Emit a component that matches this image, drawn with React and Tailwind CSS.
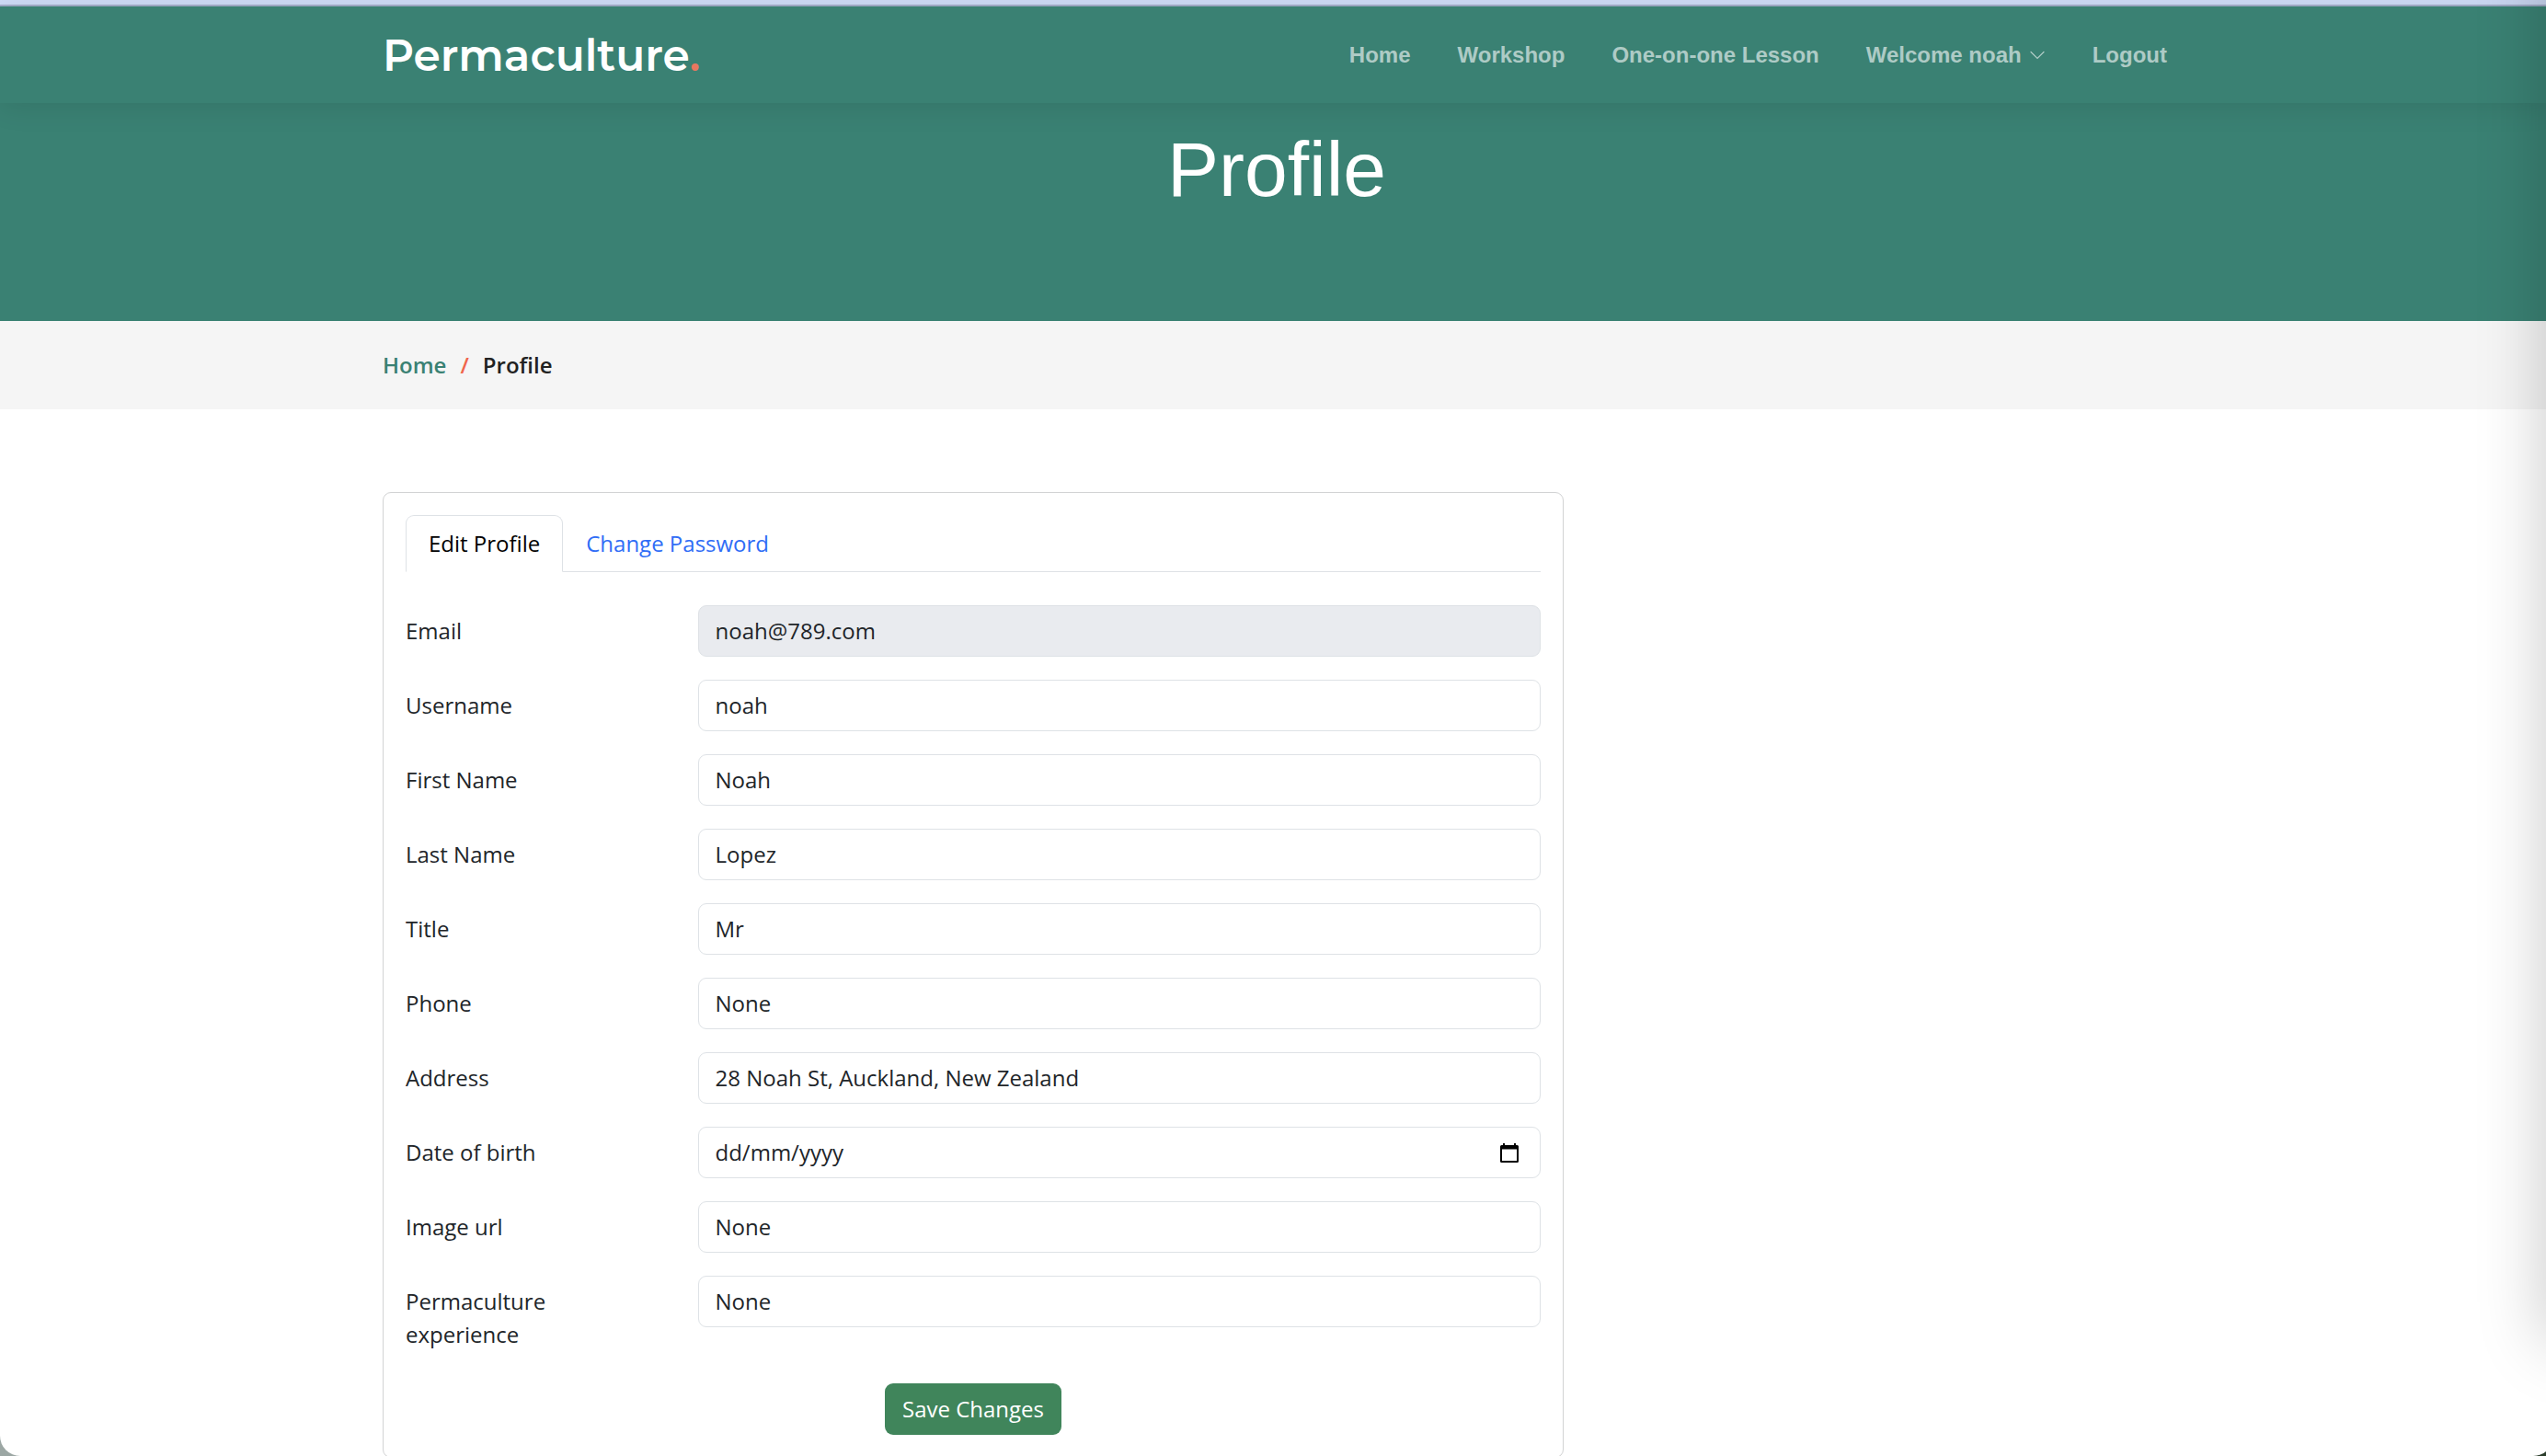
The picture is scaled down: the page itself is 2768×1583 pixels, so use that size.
import React from "react";

const navClass = "text-white/60 hover:text-white";

const fields = [
  { id: "username", label: "Username", value: "noah" },
  { id: "first-name", label: "First Name", value: "Noah" },
  { id: "last-name", label: "Last Name", value: "Lopez" },
  { id: "title", label: "Title", value: "Mr" },
  { id: "phone", label: "Phone", value: "None" },
  { id: "address", label: "Address", value: "28 Noah St, Auckland, New Zealand" },
  { id: "dob", label: "Date of birth", value: "", type: "date" },
  { id: "image-url", label: "Image url", value: "None" },
  { id: "experience", label: "Permaculture experience", value: "None" },
];

function Container({ className = "", children }) {
  return <div className={`mx-auto w-full max-w-[1980px] px-[18px] ${className}`}>{children}</div>;
}

function CalendarIcon() {
  return (
    <svg viewBox="0 0 20 21" className="h-[21px] w-5" aria-hidden="true">
      <path
        fill="#000"
        d="M3 0h2v2h10V0h2v2h1.5A1.5 1.5 0 0 1 20 3.500V19.500A1.500 1.500 0 0 1 18.500 21H1.500A1.500 1.500 0 0 1 0 19.500V3.500A1.500 1.500 0 0 1 1.500 2H3zM2 6.500V19H18V6.500z"
      />
    </svg>
  );
}

function Field({ id, label, value, type = "text", readOnly = false }) {
  const box = readOnly ? "bg-[#e9ebef]" : "bg-white";
  return (
    <div className="-mx-[18px] flex items-start">
      <label htmlFor={id} className="w-1/4 py-[10px] pr-9 pl-[18px]">
        {label}
      </label>
      <div className="w-3/4 px-[18px]">
        {type === "date" ? (
          <div className="flex h-14 items-center rounded-[9px] border border-[#dee2e6] bg-white pr-[23px] pl-[18px]">
            <input
              id={id}
              type="text"
              defaultValue="dd/mm/yyyy"
              className="min-w-0 flex-1 bg-transparent outline-none"
            />
            <button type="button" aria-label="Open calendar">
              <CalendarIcon />
            </button>
          </div>
        ) : (
          <input
            id={id}
            type={type}
            defaultValue={value}
            readOnly={readOnly}
            className={`block h-14 w-full rounded-[9px] border border-[#dee2e6] px-[18px] pb-0.5 ${box}`}
          />
        )}
      </div>
    </div>
  );
}

export default function App() {
  return (
    <div className="relative h-screen overflow-hidden bg-linear-to-r from-[#9ca7a4] to-[#2b3d2b]">
      {/* The page runs slightly past the right edge of the window */}
      <div className="-mr-2 h-full overflow-hidden rounded-b-[22px] bg-white font-['Open_Sans',sans-serif] text-2xl leading-9 text-[#212529]">
        <div className="h-[7px] border-b-2 border-[#a3adc9] bg-[#cfdcf7]" />

        <header className="relative bg-[#3a8173] shadow-[0_3px_30px_rgba(0,0,0,0.1)]">
          <Container className="flex h-[105px] items-center justify-between">
            <a
              href="#home"
              className="pt-0.5 font-['Montserrat','Inter',sans-serif] text-[47px] leading-[60px] font-semibold text-white"
            >
              Permaculture<span className="text-[#e8775f]">.</span>
            </a>
            <nav className="flex items-center gap-[51px] pr-1 font-['Liberation_Sans',sans-serif] font-bold">
              <a href="#home" className={navClass}>Home</a>
              <a href="#workshop" className={navClass}>Workshop</a>
              <a href="#lesson" className={navClass}>One-on-one Lesson</a>
              <a href="#account" className={`flex items-center gap-2 ${navClass}`}>
                Welcome noah
                <svg viewBox="0 0 18 10" className="h-[10px] w-[18px]" fill="none" stroke="currentColor" strokeWidth="1.2" strokeLinecap="round" aria-hidden="true">
                  <path d="M2 1.500l7 7 7-7" />
                </svg>
              </a>
              <a href="#logout" className={navClass}>Logout</a>
            </nav>
          </Container>
        </header>

        <section className="bg-[#3a8173]">
          <Container className="pt-[22px] pb-[115px] text-center">
            <h1 className="font-['Liberation_Sans',sans-serif] text-[84px] leading-[100px] text-white">Profile</h1>
          </Container>
        </section>

        <nav aria-label="Breadcrumb" className="bg-[#f5f5f5] py-[30px] font-semibold">
          <Container>
            <ol className="flex gap-[15px]">
              <li><a href="#home" className="text-[#3a8173]">Home</a></li>
              <li className="text-[#f0654b]" aria-hidden="true">/</li>
              <li className="text-[#222222]">Profile</li>
            </ol>
          </Container>
        </nav>

        <main className="pt-[90px]">
          <Container>
            <div className="-mx-[18px]">
              <div className="w-2/3 px-[18px]">
                <div className="rounded-[9px] border border-[#d2d3d4] p-6">
                  <div role="tablist" className="flex border-b border-[#dee2e6]">
                    <button
                      type="button"
                      role="tab"
                      aria-selected="true"
                      className="-mb-px rounded-t-[9px] border border-[#dee2e6] border-b-white bg-white px-6 py-3 text-black"
                    >
                      Edit Profile
                    </button>
                    <button
                      type="button"
                      role="tab"
                      aria-selected="false"
                      className="-mb-px border border-transparent px-6 py-3 text-[#2f6df6]"
                    >
                      Change Password
                    </button>
                  </div>
                  <form className="flex flex-col gap-[25px] pt-9" onSubmit={(e) => e.preventDefault()}>
                    <Field id="email" label="Email" value="noah@789.com" readOnly />
                    {fields.map((f) => (
                      <Field key={f.id} {...f} />
                    ))}
                    <button
                      type="submit"
                      className="self-center rounded-[9px] bg-[#40855b] px-[19px] py-[10px] text-white"
                    >
                      Save Changes
                    </button>
                  </form>
                </div>
              </div>
            </div>
          </Container>
        </main>
      </div>

      {/* Shadow cast by the neighbouring window on the right */}
      <div className="pointer-events-none absolute -top-40 bottom-[125px] left-full w-40 shadow-[0_0_75px_rgba(0,0,0,0.22)]" />
    </div>
  );
}
